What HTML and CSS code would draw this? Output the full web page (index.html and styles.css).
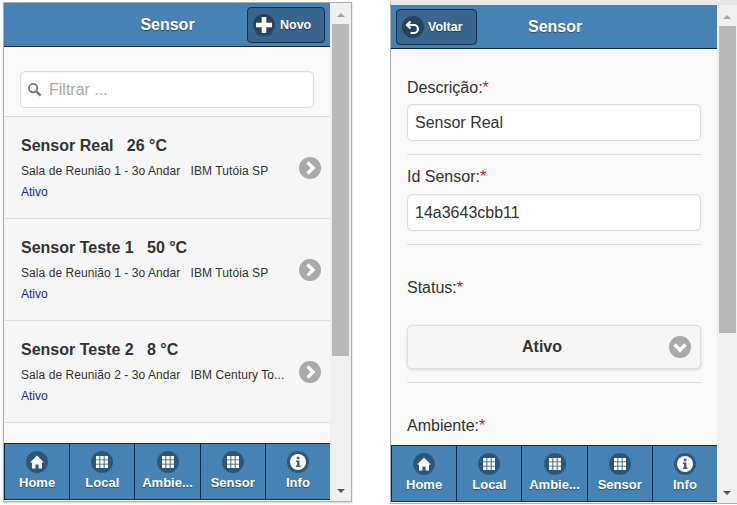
FILE: index.html
```html
<!DOCTYPE html>
<html lang="en">
<head>
  <meta charset="UTF-8">
  <title>Sensor</title>
  <link rel="stylesheet" href="styles.css">
</head>
<body>
  <svg class="defs" width="0" height="0">
    <symbol id="i-plus" viewBox="0 0 22 22"><path d="M8.700 3h4.600v5.700H19v4.600h-5.700V19H8.700v-5.700H3V8.700h5.700z" fill="#fff"/></symbol>
    <symbol id="i-back" viewBox="0 0 22 22"><path d="M8.500 5.500 5 9l3.500 3.500M5.500 9H12a3.600 3.600 0 0 1 0 8H8.500" fill="none" stroke="#fff" stroke-width="2.200"/></symbol>
    <symbol id="i-home" viewBox="0 0 22 22"><path d="M11 4.500 18 11.500h-2v6h-3.500v-4h-3v4H6v-6H4z" fill="#fff"/></symbol>
    <symbol id="i-grid" viewBox="0 0 22 22"><path d="M5 5h3.400v3.400H5zM9.300 5h3.400v3.400H9.300zM13.600 5H17v3.400h-3.400zM5 9.300h3.400v3.400H5zM9.300 9.300h3.400v3.400H9.300zM13.600 9.300H17v3.400h-3.400zM5 13.600h3.400V17H5zM9.300 13.600h3.400V17H9.300zM13.600 13.600H17V17h-3.400z" fill="#fff"/></symbol>
    <symbol id="i-info" viewBox="0 0 22 22"><circle cx="11" cy="11" r="8" fill="#fff"/><path d="M9.800 5.800h2.600v2.400H9.800zM9 9.400h3.400v5h1v1.600H9v-1.600h1v-3.400H9z" fill="#3f5f7d"/></symbol>
    <symbol id="i-right" viewBox="0 0 22 22"><path d="M8.500 5.500 14 11l-5.500 5.500" fill="none" stroke="#fff" stroke-width="3.400"/></symbol>
    <symbol id="i-down" viewBox="0 0 22 22"><path d="M5.500 8.500 11 14l5.500-5.500" fill="none" stroke="#fff" stroke-width="3.400"/></symbol>
  </svg>

  <div class="window window-list">
    <div class="page">
      <div class="header">
        <h1 class="title title-center">Sensor</h1>
        <a class="btn btn-right"><span class="ico"><svg><use href="#i-plus"/></svg></span>Novo</a>
      </div>
      <div class="content">
        <div class="search-wrap">
          <div class="search">
            <svg class="search-ico" viewBox="0 0 16 16"><circle cx="6.500" cy="6.500" r="4.500" fill="none" stroke="#777" stroke-width="2"/><path d="M10 10l4.500 4.500" stroke="#777" stroke-width="2.400"/></svg>
            <span>Filtrar ...</span>
          </div>
        </div>
        <ul class="list">
          <li class="item">
            <div class="item-text">
              <h3>Sensor Real &nbsp; 26 °C</h3>
              <p>Sala de Reunião 1 - 3o Andar &nbsp; IBM Tutóia SP</p>
              <p class="status">Ativo</p>
            </div>
            <svg class="round"><use href="#i-right"/></svg>
          </li>
          <li class="item">
            <div class="item-text">
              <h3>Sensor Teste 1 &nbsp; 50 °C</h3>
              <p>Sala de Reunião 1 - 3o Andar &nbsp; IBM Tutóia SP</p>
              <p class="status">Ativo</p>
            </div>
            <svg class="round"><use href="#i-right"/></svg>
          </li>
          <li class="item">
            <div class="item-text">
              <h3>Sensor Teste 2 &nbsp; 8 °C</h3>
              <p>Sala de Reunião 2 - 3o Andar &nbsp; IBM Century To...</p>
              <p class="status">Ativo</p>
            </div>
            <svg class="round"><use href="#i-right"/></svg>
          </li>
        </ul>
      </div>
      <div class="footer">
        <a class="tab"><span class="ico"><svg><use href="#i-home"/></svg></span>Home</a>
        <a class="tab"><span class="ico"><svg><use href="#i-grid"/></svg></span>Local</a>
        <a class="tab"><span class="ico"><svg><use href="#i-grid"/></svg></span>Ambie...</a>
        <a class="tab"><span class="ico"><svg><use href="#i-grid"/></svg></span>Sensor</a>
        <a class="tab"><span class="ico"><svg><use href="#i-info"/></svg></span>Info</a>
      </div>
    </div>
    <div class="scrollbar">
      <span class="arrow-up"></span>
      <div class="track"><div class="thumb thumb-list"></div></div>
      <span class="arrow-down"></span>
    </div>
  </div>

  <div class="window window-form">
    <div class="page">
      <div class="header">
        <a class="btn btn-left"><span class="ico"><svg><use href="#i-back"/></svg></span>Voltar</a>
        <h1 class="title title-form">Sensor</h1>
      </div>
      <div class="content form">
        <div class="field">
          <label>Descrição:<em>*</em></label>
          <div class="input">Sensor Real</div>
        </div>
        <div class="field">
          <label>Id Sensor:<em>*</em></label>
          <div class="input">14a3643cbb11</div>
        </div>
        <div class="field">
          <label class="label-status">Status:<em>*</em></label>
          <div class="select">Ativo<svg class="round"><use href="#i-down"/></svg></div>
        </div>
        <div class="field field-last">
          <label>Ambiente:<em>*</em></label>
        </div>
      </div>
      <div class="footer">
        <a class="tab"><span class="ico"><svg><use href="#i-home"/></svg></span>Home</a>
        <a class="tab"><span class="ico"><svg><use href="#i-grid"/></svg></span>Local</a>
        <a class="tab"><span class="ico"><svg><use href="#i-grid"/></svg></span>Ambie...</a>
        <a class="tab"><span class="ico"><svg><use href="#i-grid"/></svg></span>Sensor</a>
        <a class="tab"><span class="ico"><svg><use href="#i-info"/></svg></span>Info</a>
      </div>
    </div>
    <div class="scrollbar">
      <span class="arrow-up"></span>
      <div class="track"><div class="thumb thumb-form"></div></div>
      <span class="arrow-down"></span>
    </div>
  </div>
</body>
</html>
```

FILE: styles.css
```css
html, body { height: 100%; }
body { margin: 0; background: #fff; font-family: "Liberation Sans", Arial, sans-serif; color: #333; display: flex; align-items: flex-start; overflow: hidden; }
.defs { display: block; flex: none; }
h1, h3, p, ul { margin: 0; padding: 0; }
ul { list-style: none; }

.window { display: flex; border: 1px solid #a9afb5; box-sizing: border-box; background: #f0f0f0; }
.window-list { width: 349px; height: 500px; margin: 2px 0 0 3px; box-shadow: 0 1px 2px #0003; }
.window-form { width: 347px; height: 504px; margin: 0 0 0 38px; border-top: 5px solid #e8e8e8; border-right: 0; }

.page { width: 326px; display: flex; flex-direction: column; background: #f9f9f9; flex: none; padding-bottom: 1px; box-sizing: border-box; }

.header { height: 44px; box-sizing: border-box; flex: none; background: #4682b4; border-bottom: 1px solid #0e2a44; display: flex; align-items: center; position: relative; }
.title { font-size: 16px; font-weight: bold; color: #fff; text-shadow: 0 1px 1px #0006; }
.title-center { flex: 1; text-align: center; padding-left: 1px; }
.title-form { margin-left: 51px; }

.btn { display: flex; align-items: center; height: 36px; box-sizing: border-box; background: #38668f; border: 1px solid #14304a; border-radius: 4px; color: #fff; font-size: 12.500px; font-weight: bold; text-shadow: 0 1px 1px #0006; }
.btn-right { width: 78px; padding-left: 5px; gap: 5px; position: absolute; right: 5px; top: 4px; }
.btn-left { width: 81px; padding-left: 5px; gap: 4px; margin-left: 5px; }
.ico { width: 22px; height: 22px; border-radius: 50%; background: #00000055; display: block; flex: none; }
.ico svg { width: 22px; height: 22px; display: block; }

.content { flex: 1; min-height: 0; overflow: hidden; }

.search-wrap { padding: 24px 16px 8px; border-bottom: 1px solid #ddd; }
.search { height: 37px; box-sizing: border-box; background: #fff; border: 1px solid #ddd; border-radius: 5px; display: flex; align-items: center; padding-left: 6px; gap: 7px; font-size: 16px; color: #aaa; box-shadow: inset 0 1px 2px #0000000d; }
.search-ico { width: 15px; height: 15px; flex: none; }

.item { height: 101px; border-bottom: 1px solid #ddd; background: #f6f6f6; display: flex; align-items: center; padding-left: 17px; padding-right: 9px; }
.item-text { flex: 1; min-width: 0; }
.item h3 { font-size: 16px; font-weight: bold; line-height: 20px; margin-bottom: 8px; white-space: nowrap; }
.item p { font-size: 12px; line-height: 14px; margin-bottom: 7px; white-space: nowrap; letter-spacing: .07px; }
.item .status { color: #2222bb; margin-bottom: 0; letter-spacing: 0; }
.round { width: 22px; height: 22px; border-radius: 50%; background: #aaa; flex: none; }

.form { padding: 0 16px; background: #f9f9f9; }
.field { border-bottom: 1px solid #ddd; padding-bottom: 13px; }
.field label { display: block; font-size: 16px; line-height: 20px; margin-top: 29px; margin-bottom: 6px; }
.field + .field label { margin-top: 12px; margin-bottom: 7px; }
.field label em { color: #d11; font-style: normal; }
.field + .field .label-status { margin-top: 33px; margin-bottom: 27px; }
.field-last { border-bottom: 0; }
.field + .field-last label { margin-top: 33px; }
.input { height: 37px; box-sizing: border-box; background: #fff; border: 1px solid #ddd; border-radius: 5px; font-size: 16px; line-height: 35px; padding-left: 7px; box-shadow: inset 0 1px 2px #0000000d; }
.select { height: 44px; box-sizing: border-box; background: #f6f6f6; border: 1px solid #ddd; border-radius: 5px; font-size: 16px; font-weight: bold; display: flex; align-items: center; justify-content: center; padding-right: 24px; position: relative; box-shadow: 0 1px 3px #00000026; }
.select .round { position: absolute; right: 9px; top: 10px; }

.footer { height: 57px; flex: none; display: flex; background: #4682b4; border: 1px solid #0e2a44; border-right: 0; box-sizing: border-box; }
.tab { flex: 1; display: flex; flex-direction: column; align-items: center; padding-top: 7px; gap: 2px; color: #fff; font-size: 13px; font-weight: bold; line-height: 16px; text-shadow: 0 1px 1px #0006; border-right: 1px solid #0e2a44; }
.tab:last-child { border-right: 0; }

.scrollbar { flex: 1; display: flex; flex-direction: column; align-items: center; background: #f0f0f0; }
.track { flex: 1; width: 100%; padding: 0 2px; box-sizing: border-box; }
.window-form .track { padding-right: 1px; }
.thumb { background: #b9b9b9; }
.thumb-list { height: 332px; }
.thumb-form { height: 307px; }
.arrow-up { flex: none; width: 0; height: 0; border: 4px solid transparent; border-top: 0; border-bottom: 4px solid #a6a6a6; margin: 10px 0 7px; }
.arrow-down { flex: none; width: 0; height: 0; border: 4px solid transparent; border-bottom: 0; border-top: 4px solid #555; margin: 8px 0 8px; }
```
